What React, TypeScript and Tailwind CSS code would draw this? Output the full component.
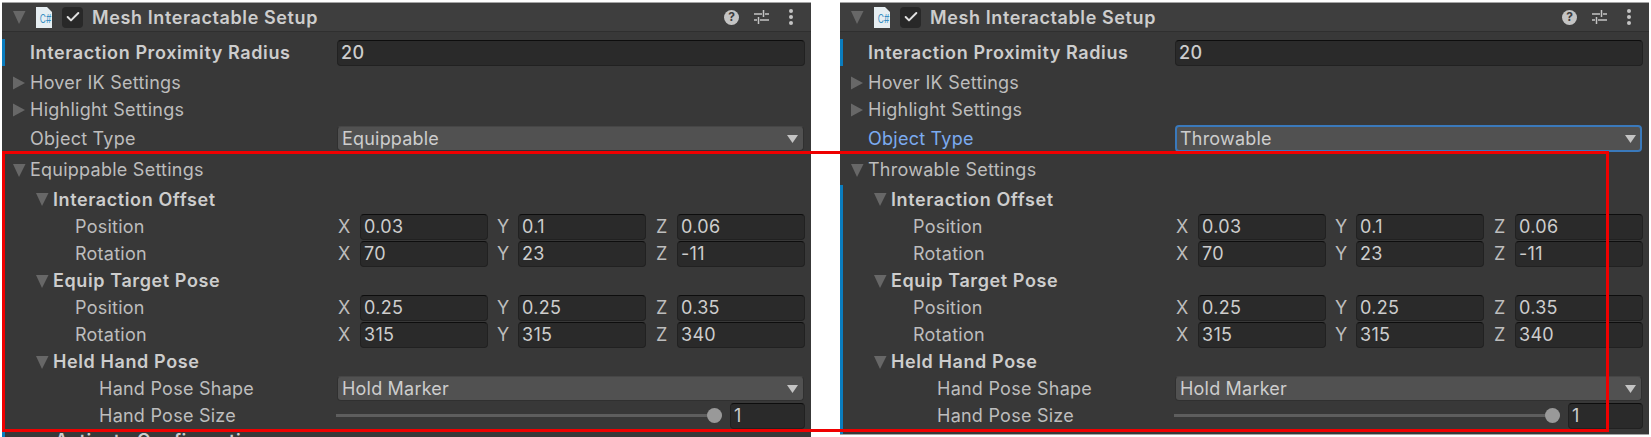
import type { ReactNode } from "react";
import { Check } from "lucide-react";

function Arrow({ open }: { open?: boolean }) {
  return (
    <svg width="14" height="14" viewBox="0 0 14 14" className="shrink-0">
      {open ? <path d="M1 1h12.5L7 14z" fill="#676767" /> : <path d="M1 0.5v13L13 7z" fill="#676767" />}
    </svg>
  );
}

function Row({ children, h = "h-[27px]", accent }: { children?: ReactNode; h?: string; accent?: boolean }) {
  return (
    <div className={`relative flex items-center ${h}`}>
      {accent && <div className="absolute left-[-4px] top-0 bottom-0 w-[3px] bg-[#0a7dbf]" />}
      {children}
    </div>
  );
}

function Label({ children, indent, bold, arrow, blue }: { children: string; indent: string; bold?: boolean; arrow?: "open" | "closed"; blue?: boolean }) {
  return (
    <div className={`flex items-center w-[331px] shrink-0 ${indent}`}>
      {arrow && <span className="mr-[4px] flex"><Arrow open={arrow === "open"} /></span>}
      <span className={`text-[18px] whitespace-nowrap ${bold ? "font-semibold tracking-[0.6px] text-[#cdcdcd]" : blue ? "tracking-[0.25px] text-[#7babf0]" : "tracking-[0.25px] text-[#bdbdbd]"}`}>
        {children}
      </span>
    </div>
  );
}

function Field({ value, className = "flex-1" }: { value: string; className?: string }) {
  return (
    <div className={`h-[26px] rounded-[4px] bg-[#2a2a2a] border border-[#212121] border-t-[#0d0d0d] pl-[3px] flex items-center text-[18px] text-[#cdcdcd] tracking-[0.3px] ${className}`}>
      {value}
    </div>
  );
}

function Dropdown({ value, focus }: { value: string; focus?: boolean }) {
  return (
    <div className={`mr-[7px] flex-1 rounded-[4px] bg-[#515151] flex items-center justify-between text-[18px] text-[#cdcdcd] tracking-[0.2px] ${focus ? "h-[27px] border-2 border-[#3a79bb] pl-[3px] pr-[4px]" : "h-[25px] border border-[#303030] border-t-[#464646] pl-[4px] pr-[5px]"}`}>
      <span>{value}</span>
      <svg width="11" height="8" viewBox="0 0 11 8"><path d="M0 0h11L5.5 8z" fill="#c4c4c4" /></svg>
    </div>
  );
}

function Vec3({ label, x, y, z }: { label: string; x: string; y: string; z: string }) {
  return (
    <Row>
      <Label indent="pl-[69px]">{label}</Label>
      <div className="flex-1 flex items-center pr-[6px] text-[18px] text-[#bdbdbd]">
        <span className="w-[23px] shrink-0 pl-[1px]">X</span>
        <Field value={x} />
        <span className="w-[30px] shrink-0 pl-[9px]">Y</span>
        <Field value={y} />
        <span className="w-[31px] shrink-0 pl-[10px]">Z</span>
        <Field value={z} />
      </div>
    </Row>
  );
}

function Panel({ type, settings, focus }: { type: string; settings: string; focus?: boolean }) {
  return (
    <div className={`relative w-[809px] overflow-hidden bg-[#383838] border-t border-[#a5a5a5] ${focus ? "h-[433px] border-b" : "h-[435px]"}`}>
      <div className="flex items-center h-[29px] bg-[#3e3e3e] border-b border-[#2f2f2f]">
        <span className="ml-[10px] flex"><Arrow open /></span>
        <svg width="16" height="21" viewBox="0 0 16 21" className="ml-[10px]">
          <path d="M0 0h11l5 5v16H0z" fill="#e6eef2" />
          <text x="5.5" y="16" fontSize="12" fill="#3a8fc4" fontFamily="Inter" transform="scale(0.7 1)">C#</text>
        </svg>
        <span className="ml-[10px] w-[21px] h-[21px] rounded-[4px] bg-[#282828] flex items-center justify-center">
          <Check size={16} strokeWidth={3} color="#e0e0e0" />
        </span>
        <span className="ml-[9px] text-[18px] font-semibold text-[#cdcdcd] tracking-[0.6px]">Mesh Interactable Setup</span>
        <div className="ml-auto flex items-center pr-[18px]">
          <span className="w-[15px] h-[15px] rounded-full bg-[#c4c4c4] flex items-center justify-center text-[12px] font-bold text-[#3e3e3e]">?</span>
          <svg width="15" height="16" viewBox="0 0 15 16" className="ml-[15px]" fill="none" stroke="#c4c4c4" strokeWidth="1.5">
            <path d="M0 5h8M11 5h4M9.5 1v7" />
            <path d="M0 11h3M6 11h9M4.5 8v7" />
          </svg>
          <svg width="4" height="16" viewBox="0 0 4 16" className="ml-[20px]">
            <circle cx="2" cy="2" r="2" fill="#c4c4c4" />
            <circle cx="2" cy="8" r="2" fill="#c4c4c4" />
            <circle cx="2" cy="14" r="2" fill="#c4c4c4" />
          </svg>
        </div>
      </div>
      <div className="pl-[4px]">
        <div className="h-[7px]" />
        <Row accent>
          <Label indent="pl-[24px]" bold>Interaction Proximity Radius</Label>
          <Field value="20" className="flex-1 mr-[6px] font-medium" />
        </Row>
        <div className="h-[3px]" />
        <Row><Label indent="pl-[6px]" arrow="closed">Hover IK Settings</Label></Row>
        <Row><Label indent="pl-[6px]" arrow="closed">Highlight Settings</Label></Row>
        <Row h="h-[31px]">
          <Label indent="pl-[24px]" blue={focus}>Object Type</Label>
          <Dropdown value={type} focus={focus} />
        </Row>
        <Row h="h-[31px]"><Label indent="pl-[6px]" arrow="open">{settings}</Label></Row>
        <div className={focus ? "relative before:absolute before:left-[-4px] before:top-0 before:bottom-0 before:w-[3px] before:bg-[#0a7dbf]" : ""}>
          <Row h="h-[28px]"><Label indent="pl-[29px]" bold arrow="open">Interaction Offset</Label></Row>
          <Vec3 label="Position" x="0.03" y="0.1" z="0.06" />
          <Vec3 label="Rotation" x="70" y="23" z="-11" />
          <Row><Label indent="pl-[29px]" bold arrow="open">Equip Target Pose</Label></Row>
          <Vec3 label="Position" x="0.25" y="0.25" z="0.35" />
          <Vec3 label="Rotation" x="315" y="315" z="340" />
          <Row><Label indent="pl-[29px]" bold arrow="open">Held Hand Pose</Label></Row>
          <Row>
            <Label indent="pl-[93px]">Hand Pose Shape</Label>
            <Dropdown value="Hold Marker" />
          </Row>
          <Row>
            <Label indent="pl-[93px]">Hand Pose Size</Label>
            <div className="flex-1 flex items-center pr-[6px]">
              <div className="relative flex-1 h-[3px] bg-[#5e5e5e] ml-[-1px] mr-[8px]">
                <div className="absolute right-[0px] top-[-6px] w-[15px] h-[15px] rounded-full bg-[#999999]" />
              </div>
              <Field value="1" className="w-[75px] shrink-0" />
            </div>
          </Row>
          {focus && <div className="h-[6px]" />}
        </div>
        {!focus && (
          <Row h="h-[23px]" accent>
            <span className="pl-[49px] text-[18px] font-semibold tracking-[0.6px] text-[#cdcdcd] whitespace-nowrap">Activate Configuration</span>
          </Row>
        )}
      </div>
    </div>
  );
}

export default function App() {
  return (
    <div className="relative w-[1651px] h-[437px] overflow-hidden bg-white pt-[2px] pl-[2px] font-['Inter',sans-serif]">
      <div className="flex gap-[29px]">
        <Panel type="Equippable" settings="Equippable Settings" />
        <Panel type="Throwable" settings="Throwable Settings" focus />
      </div>
      {/* red highlight drawn on top of the two inspectors */}
      <div className="absolute left-[2px] top-[151px] w-[1607px] h-[281px] border-[3px] border-[#f00000]" />
    </div>
  );
}
